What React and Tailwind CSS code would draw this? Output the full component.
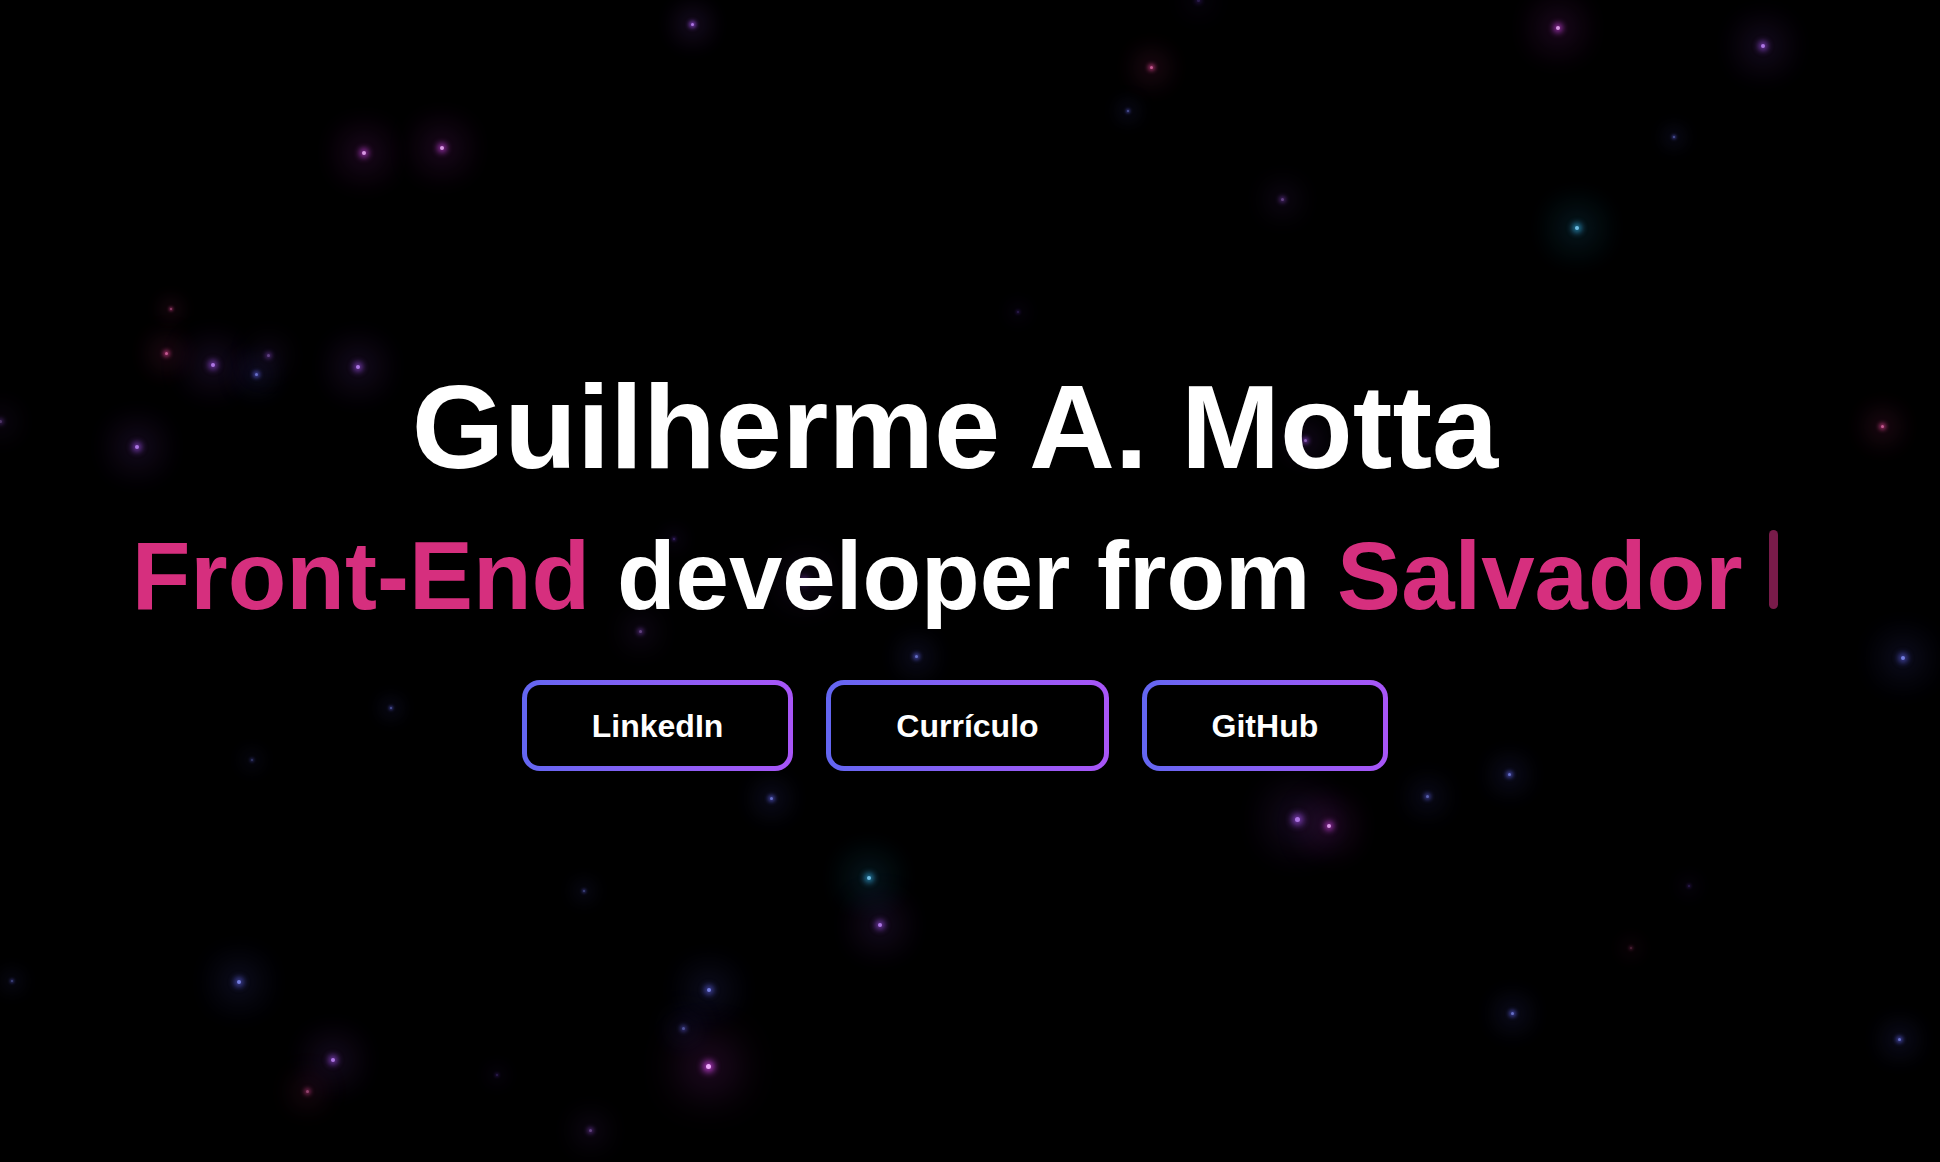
import React from "react";

const C = {
  m: ["#f0abfc", "217,70,239"],
  p: ["#c084fc", "168,85,247"],
  b: ["#818cf8", "99,102,241"],
  c: ["#7dd3fc", "56,189,248"],
  k: ["#f472b6", "236,72,153"],
  d: ["#8b5cf6", "124,58,237"],
};

const stars = [
  [692, 24, "p", 3, 0.9], [1558, 28, "m", 4, 0.9], [1763, 46, "p", 4, 0.9],
  [1151, 67, "k", 3, 0.8], [1128, 111, "b", 2, 0.6], [1674, 137, "b", 2, 0.6],
  [364, 153, "m", 4, 0.9], [442, 148, "m", 4, 0.9], [1282, 199, "p", 3, 0.5],
  [1577, 228, "c", 4, 0.9], [171, 309, "k", 2, 0.6], [1018, 312, "d", 2, 0.3],
  [166, 353, "k", 3, 0.8], [213, 365, "p", 4, 0.9], [256, 374, "b", 3, 0.8],
  [268, 355, "p", 3, 0.5], [358, 367, "p", 4, 0.9], [137, 447, "p", 4, 0.9],
  [1882, 426, "k", 3, 0.8], [1305, 440, "p", 3, 0.7], [674, 539, "d", 2, 0.4],
  [640, 631, "p", 3, 0.5], [916, 656, "b", 3, 0.8], [1903, 658, "b", 4, 0.9],
  [391, 708, "b", 2, 0.6], [252, 760, "b", 2, 0.4], [771, 798, "b", 3, 0.8],
  [1509, 774, "b", 3, 0.8], [1427, 796, "b", 3, 0.7], [1297, 819, "p", 5, 0.9],
  [1329, 826, "m", 4, 0.9], [869, 878, "c", 4, 0.9], [584, 891, "b", 2, 0.5],
  [880, 925, "p", 4, 0.9], [1689, 886, "d", 2, 0.3], [12, 981, "b", 2, 0.5],
  [239, 982, "b", 4, 0.9], [709, 990, "b", 4, 0.9], [683, 1028, "b", 3, 0.6],
  [1512, 1013, "b", 3, 0.8], [1899, 1039, "b", 3, 0.8], [1631, 948, "k", 2, 0.3],
  [333, 1060, "p", 4, 0.9], [708, 1066, "m", 5, 1], [307, 1091, "k", 3, 0.6],
  [497, 1075, "d", 2, 0.3], [590, 1130, "p", 3, 0.5], [804, 581, "p", 4, 0.6],
  [0, 421, "p", 3, 0.4], [1198, 0, "d", 3, 0.3],
];

function Star({ x, y, c, s, o }) {
  const [core, rgb] = C[c];
  return (
    <div
      className="absolute rounded-full"
      style={{
        left: x - s / 2,
        top: y - s / 2,
        width: s,
        height: s,
        opacity: o,
        background: core,
        boxShadow: `0 0 ${s * 1.5}px ${s * 0.6}px rgba(${rgb},0.9), 0 0 ${s * 9}px ${s * 4}px rgba(${rgb},0.22)`,
      }}
    />
  );
}

function Btn({ children }) {
  return (
    <a className="block h-[91px] rounded-[18px] bg-gradient-to-r from-[#6366f1] to-[#a855f7] p-[5px]">
      <span className="flex h-full items-center rounded-[13px] bg-black px-[65px] text-[32px] font-bold text-white">
        {children}
      </span>
    </a>
  );
}

export default function App() {
  return (
    <div className="relative h-screen w-full overflow-hidden bg-black font-['Liberation_Sans',Arial,sans-serif]">
      <div className="pointer-events-none absolute inset-0">
        {stars.map(([x, y, c, s, o], i) => (
          <Star key={i} x={x} y={y} c={c} s={s} o={o} />
        ))}
      </div>
      <div className="relative flex flex-col items-center pt-[367px] pr-[30px]">
        <h1 className="text-[119px] font-bold leading-none text-white">
          Guilherme A. Motta
        </h1>
        <h2 className="mt-[42px] whitespace-nowrap text-[96px] font-bold leading-none text-white">
          <span className="text-[#d62f7e]">Front-End</span> developer from{" "}
          <span className="text-[#d62f7e]">Salvador</span>{" "}
          <span className="inline-block h-[79px] w-[9px] rounded-full bg-[#781b4a] align-baseline" />
        </h2>
        <div className="mt-[56px] flex gap-[33px]">
          <Btn>LinkedIn</Btn>
          <Btn>Currículo</Btn>
          <Btn>GitHub</Btn>
        </div>
      </div>
    </div>
  );
}
